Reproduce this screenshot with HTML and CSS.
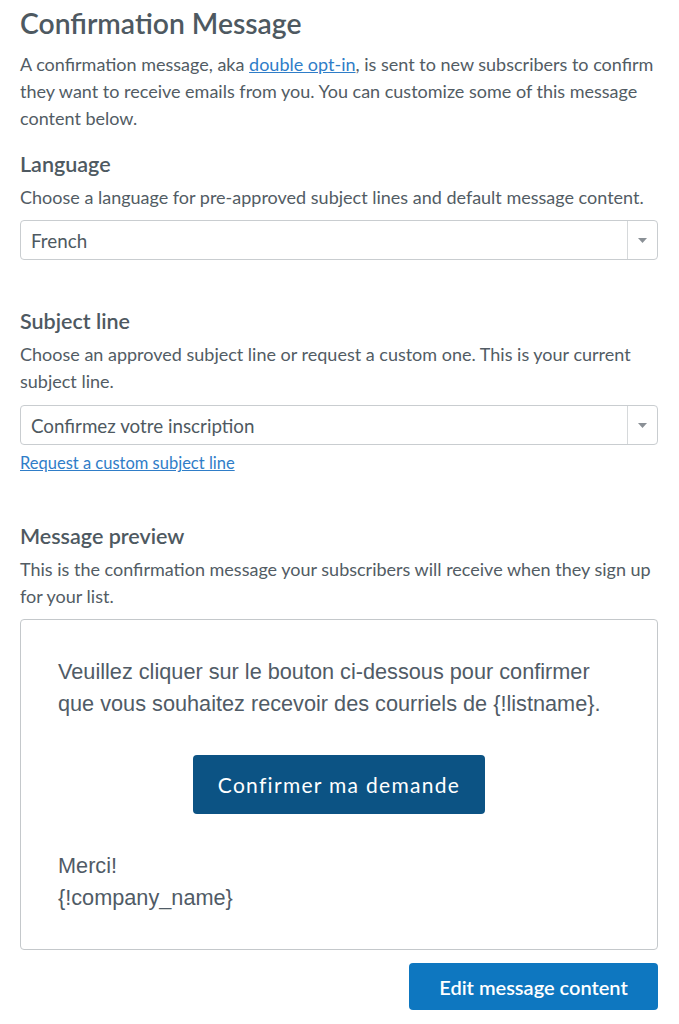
FILE: index.html
```html
<!DOCTYPE html>
<html>
<head>
<meta charset="utf-8">
<link rel="stylesheet" href="styles.css">
</head>
<body>
<div class="page">
  <h1 class="title">Confirmation Message</h1>
  <p class="desc">A confirmation message, aka <a href="#" class="link">double opt-in</a>, is sent to new subscribers to confirm they want to receive emails from you. You can customize some of this message content below.</p>

  <section class="section sec-lang">
    <h2 class="label">Language</h2>
    <p class="desc">Choose a language for pre-approved subject lines and default message content.</p>
    <div class="select">
      <span class="select-value">French</span>
      <span class="select-arrow"><svg width="9" height="5" viewBox="0 0 9 5"><path d="M0 0h9L4.5 5z" fill="#8a9096"/></svg></span>
    </div>
  </section>

  <section class="section sec-subject">
    <h2 class="label">Subject line</h2>
    <p class="desc">Choose an approved subject line or request a custom one. This is your current subject line.</p>
    <div class="select">
      <span class="select-value">Confirmez votre inscription</span>
      <span class="select-arrow"><svg width="9" height="5" viewBox="0 0 9 5"><path d="M0 0h9L4.5 5z" fill="#8a9096"/></svg></span>
    </div>
    <a href="#" class="link small-link">Request a custom subject line</a>
  </section>

  <section class="section sec-preview">
    <h2 class="label">Message preview</h2>
    <p class="desc">This is the confirmation message your subscribers will receive when they sign up for your list.</p>
    <div class="preview">
      <p class="mail-text">Veuillez cliquer sur le bouton ci-dessous pour confirmer que vous souhaitez recevoir des courriels de {!listname}.</p>
      <div class="mail-btn-row"><span class="mail-btn">Confirmer ma demande</span></div>
      <p class="mail-text sign">Merci!<br>{!company_name}</p>
    </div>
    <div class="actions"><button class="edit-btn">Edit message content</button></div>
  </section>
</div>
</body>
</html>
```
FILE: styles.css
```css
* { box-sizing: border-box; }
html, body { margin: 0; padding: 0; background: #fff; }
body { font-family: "Source Sans Pro", Lato, "Liberation Sans", sans-serif; color: #4f5962; }
.page { padding: 5px 21px 0 20px; }
.title { margin: 0; font-size: 28.3px; font-weight: 600; line-height: 36px; color: #4e5961; }
.desc { margin: 10px 0 0; font-size: 18px; line-height: 27px; color: #525c64; }
.link { color: #2f7dc8; text-decoration: underline; }
.section { display: flex; flex-direction: column; }
.sec-lang { margin-top: 18px; }
.sec-subject { margin-top: 47px; }
.sec-preview { margin-top: 49px; }
.label { margin: 0; font-size: 21.5px; font-weight: 600; line-height: 28px; color: #4e5961; }
.label + .desc { margin-top: 6px; }
.select { margin-top: 9px; height: 40px; border: 1px solid #c9cdd0; border-radius: 4px; display: flex; align-items: stretch; }
.sec-subject .select { margin-top: 10px; }
.select-value { flex: 1; display: flex; align-items: center; padding-left: 10px; font-size: 18.8px; color: #4e5961; }
.select-arrow { width: 30px; border-left: 1px solid #d6d9db; display: flex; align-items: center; justify-content: center; }
.small-link { margin-top: 8px; font-size: 16.5px; line-height: 20px; align-self: flex-start; }
.preview { margin-top: 9px; border: 1px solid #c4c8cb; border-radius: 4px; height: 331px; padding: 36px 0 0; }
.mail-text { margin: 0; padding: 0 28px 0 37px; font-family: "Liberation Sans", Arial, sans-serif; font-size: 21.7px; line-height: 32px; color: #505b66; }
.mail-btn-row { margin-top: 35px; display: flex; justify-content: center; }
.mail-btn { width: 292px; height: 59px; background: #0c5384; border-radius: 4px; color: #fff; font-size: 21px; letter-spacing: 1.3px; display: flex; align-items: center; justify-content: center; }
.sign { margin-top: 36px; }
.actions { display: flex; justify-content: flex-end; margin-top: 13px; }
.edit-btn { width: 249px; height: 47px; background: #0e77c0; border: none; border-radius: 4px; color: #fff; font-family: inherit; font-size: 20px; font-weight: 600; }
```
